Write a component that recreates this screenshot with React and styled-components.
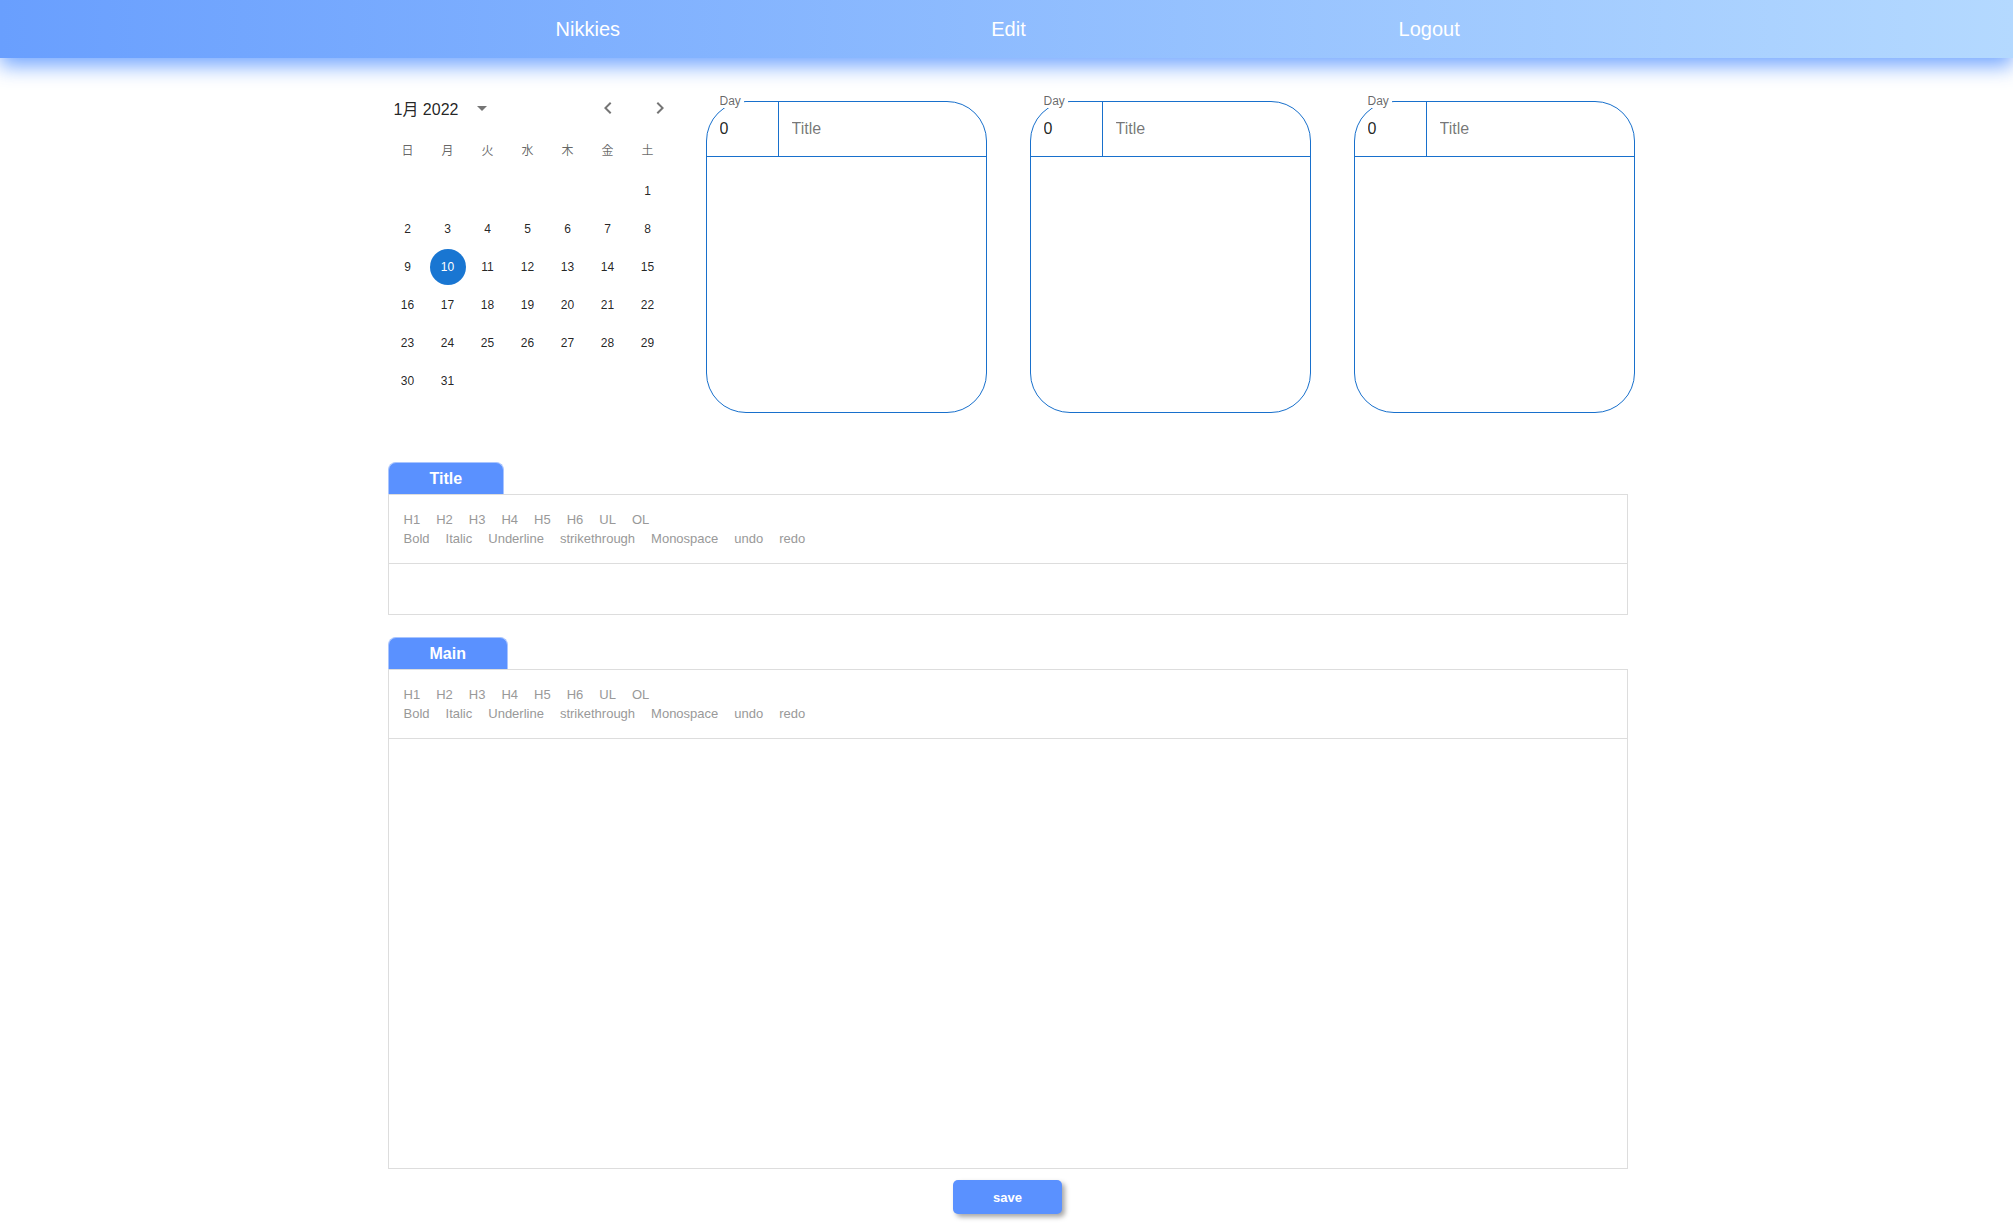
import React from "react";
import styled, { createGlobalStyle } from "styled-components";

const GlobalStyle = createGlobalStyle`
  * { box-sizing: border-box; }
  body {
    margin: 0;
    background: #fff;
    font-family: "Liberation Sans", Arial, "Noto Sans CJK JP", sans-serif;
  }
`;

const Header = styled.header`
  position: relative;
  z-index: 1;
  height: 58px;
  background: linear-gradient(90deg, #699ffe 0%, #b4d9ff 100%);
  box-shadow: 0 8px 20px rgba(90, 150, 255, 0.85);
`;

const Nav = styled.nav`
  width: 1266px;
  height: 100%;
  margin: 0 auto;
  padding-left: 4px;
  display: grid;
  grid-template-columns: repeat(3, 1fr);
  align-items: center;
`;

const NavLink = styled.a`
  color: #fff;
  font-size: 20px;
  text-align: center;
  text-decoration: none;
  cursor: pointer;
`;

const Main = styled.main`
  width: 1240px;
  margin: 36px 0 0 calc(50% - 619px);
  padding-bottom: 10px;
`;

const TopRow = styled.div`
  display: flex;
  align-items: flex-start;
`;

/* calendar */
const CalendarBox = styled.div`
  width: 284px;
  flex-shrink: 0;
  margin-right: 34px;
`;

const CalHeader = styled.div`
  height: 28px;
  display: flex;
  align-items: center;
  padding-left: 6px;
`;

const MonthLabel = styled.div`
  font-size: 16px;
  color: rgba(0, 0, 0, 0.87);
  font-family: "Liberation Sans", "Noto Sans CJK JP", sans-serif;
`;

const IconBtn = styled.span`
  width: 24px;
  height: 24px;
  display: flex;
  align-items: center;
  justify-content: center;
  color: rgba(0, 0, 0, 0.54);
  margin-left: ${({ $ml }) => $ml || 0}px;
  margin-right: ${({ $mr }) => $mr || 0}px;
  cursor: pointer;
`;

const Spacer = styled.div`
  flex: 1;
`;

const WeekRow = styled.div`
  margin-top: 9px;
  display: grid;
  grid-template-columns: repeat(7, 40px);
  height: 38px;
  align-items: center;
`;

const WeekDay = styled.span`
  text-align: center;
  font-size: 12px;
  line-height: 16px;
  color: rgba(0, 0, 0, 0.6);
  font-family: "Noto Sans CJK JP", sans-serif;
`;

const DayGrid = styled.div`
  margin-top: 3px;
  display: grid;
  grid-template-columns: repeat(7, 40px);
  grid-auto-rows: 38px;
`;

const DayCell = styled.span`
  width: 36px;
  height: 36px;
  justify-self: center;
  align-self: center;
  border-radius: 50%;
  display: flex;
  align-items: center;
  justify-content: center;
  font-size: 12px;
  color: ${({ $selected }) => ($selected ? "#fff" : "rgba(0, 0, 0, 0.87)")};
  background: ${({ $selected }) => ($selected ? "#1976d2" : "transparent")};
  grid-column-start: ${({ $start }) => $start || "auto"};
`;

/* cards */
const Card = styled.fieldset`
  width: 281px;
  height: 319px;
  flex-shrink: 0;
  min-width: 0;
  margin: 0;
  padding: 0;
  border: 1px solid #1870cc;
  border-radius: 40px;
  & + & {
    margin-left: 43px;
  }
`;

const Legend = styled.legend`
  margin-left: 10px;
  padding: 0 3px;
  font-size: 12px;
  line-height: 14px;
  color: rgba(0, 0, 0, 0.6);
`;

const CardHead = styled.div`
  display: flex;
  height: 56px;
  margin-top: -7px;
  border-bottom: 1px solid #1870cc;
`;

const CardInput = styled.input`
  height: 100%;
  border: none;
  outline: none;
  background: transparent;
  padding: 0 0 0 13px;
  font-family: "Liberation Sans", Arial, sans-serif;
  font-size: 16px;
  color: rgba(0, 0, 0, 0.87);
  min-width: 0;
  &::placeholder {
    color: rgba(0, 0, 0, 0.55);
  }
`;

const DayInput = styled(CardInput)`
  width: 72px;
  flex-shrink: 0;
  border-right: 1px solid #1870cc;
`;

const TitleInput = styled(CardInput)`
  flex: 1;
`;

/* editors */
const EditorSection = styled.section`
  margin-top: ${({ $mt }) => $mt}px;
`;

const Tab = styled.div`
  display: flex;
  align-items: center;
  width: fit-content;
  height: 32px;
  padding: 0 41px;
  background: #5a91ff;
  color: #fff;
  font-size: 16px;
  font-weight: bold;
  border: 1px solid #a9c5ff;
  border-bottom: none;
  border-radius: 8px 8px 0 0;
`;

const EditorBox = styled.div`
  border: 1px solid #ddd;
  background: #fff;
`;

const Toolbar = styled.div`
  padding: 15px;
  border-bottom: 1px solid #ddd;
`;

const ControlRow = styled.div`
  display: flex;
  gap: 16px;
`;

const StyleButton = styled.span`
  padding: 2px 0;
  font-size: 13px;
  line-height: 15px;
  color: #999;
  cursor: pointer;
  user-select: none;
`;

const EditArea = styled.div`
  height: ${({ $h }) => $h}px;
  cursor: text;
`;

const SaveButton = styled.button`
  display: block;
  width: 109px;
  height: 34px;
  margin: 11px auto 0;
  border: none;
  border-radius: 5px;
  background: #5a91ff;
  color: #fff;
  font-family: "Liberation Sans", Arial, sans-serif;
  font-size: 13px;
  font-weight: bold;
  box-shadow: 3px 3px 5px rgba(0, 0, 0, 0.35);
  cursor: pointer;
`;

const weekDays = ["日", "月", "火", "水", "木", "金", "土"];
const days = Array.from({ length: 31 }, (_, i) => i + 1);
const blockTypes = ["H1", "H2", "H3", "H4", "H5", "H6", "UL", "OL"];
const inlineTypes = ["Bold", "Italic", "Underline", "strikethrough", "Monospace", "undo", "redo"];

const DropIcon = () => (
  <svg width="24" height="24" viewBox="0 0 24 24" fill="currentColor">
    <path d="M7 10l5 5 5-5z" />
  </svg>
);
const LeftIcon = () => (
  <svg width="24" height="24" viewBox="0 0 24 24" fill="currentColor">
    <path d="M15.41 16.59 10.83 12l4.58-4.59L14 6l-6 6 6 6 1.41-1.41z" />
  </svg>
);
const RightIcon = () => (
  <svg width="24" height="24" viewBox="0 0 24 24" fill="currentColor">
    <path d="M8.59 16.59 13.17 12 8.59 7.41 10 6l6 6-6 6-1.41-1.41z" />
  </svg>
);

const Calendar = () => (
  <CalendarBox>
    <CalHeader>
      <MonthLabel>1月 2022</MonthLabel>
      <IconBtn $ml={12}>
        <DropIcon />
      </IconBtn>
      <Spacer />
      <IconBtn $mr={28}>
        <LeftIcon />
      </IconBtn>
      <IconBtn>
        <RightIcon />
      </IconBtn>
    </CalHeader>
    <WeekRow>
      {weekDays.map((d) => (
        <WeekDay key={d}>{d}</WeekDay>
      ))}
    </WeekRow>
    <DayGrid>
      {days.map((d) => (
        <DayCell key={d} $start={d === 1 ? 7 : undefined} $selected={d === 10}>
          {d}
        </DayCell>
      ))}
    </DayGrid>
  </CalendarBox>
);

const DayCard = () => (
  <Card>
    <Legend>Day</Legend>
    <CardHead>
      <DayInput defaultValue="0" />
      <TitleInput placeholder="Title" />
    </CardHead>
  </Card>
);

const Editor = ({ label, height, mt }) => (
  <EditorSection $mt={mt}>
    <Tab>{label}</Tab>
    <EditorBox>
      <Toolbar>
        <ControlRow>
          {blockTypes.map((b) => (
            <StyleButton key={b}>{b}</StyleButton>
          ))}
        </ControlRow>
        <ControlRow>
          {inlineTypes.map((b) => (
            <StyleButton key={b}>{b}</StyleButton>
          ))}
        </ControlRow>
      </Toolbar>
      <EditArea $h={height} />
    </EditorBox>
  </EditorSection>
);

export default function App() {
  return (
    <>
      <GlobalStyle />
      <Header>
        <Nav>
          <NavLink>Nikkies</NavLink>
          <NavLink>Edit</NavLink>
          <NavLink>Logout</NavLink>
        </Nav>
      </Header>
      <Main>
        <TopRow>
          <Calendar />
          <DayCard />
          <DayCard />
          <DayCard />
        </TopRow>
        <Editor label="Title" height={50} mt={49} />
        <Editor label="Main" height={429} mt={22} />
        <SaveButton>save</SaveButton>
      </Main>
    </>
  );
}
